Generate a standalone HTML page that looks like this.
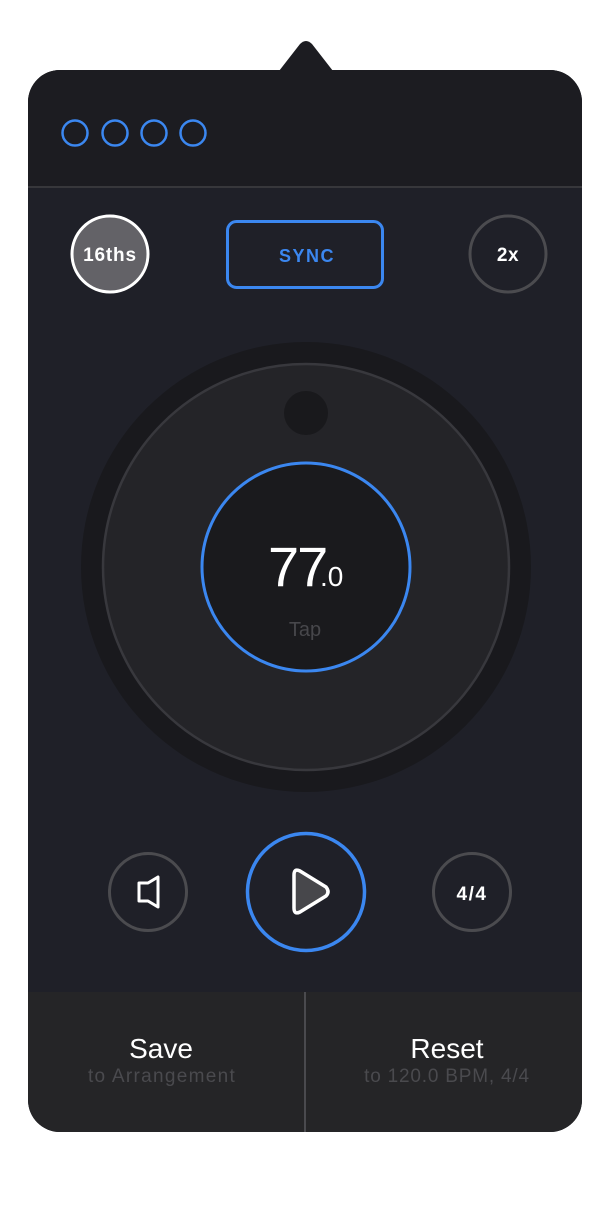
<!DOCTYPE html>
<html><head><meta charset="utf-8"><style>
html,body{margin:0;padding:0;background:#fff;width:610px;height:1216px;overflow:hidden}
svg{display:block}
text{font-family:"Liberation Sans",sans-serif}
</style></head><body>
<svg width="610" height="1216" viewBox="0 0 610 1216">
  <defs><clipPath id="c"><rect x="28" y="70" width="554" height="1062" rx="32"/></clipPath></defs>
  <path d="M279 71 L300 44 Q306 38 312 44 L333 71 Z" fill="#1c1c21"/>
  <g clip-path="url(#c)">
    <rect x="28" y="70" width="554" height="1062" fill="#1f2028"/>
    <rect x="28" y="70" width="554" height="117" fill="#1c1c21"/>
    <rect x="28" y="186" width="554" height="2" fill="#37373b"/>
    <rect x="28" y="992" width="554" height="140" fill="#252527"/>
    <rect x="304" y="992" width="2" height="140" fill="#4a4a4e"/>
  </g>
  <g fill="none" stroke="#3b87f0" stroke-width="2.5">
    <circle cx="75" cy="133" r="12.5"/><circle cx="115" cy="133" r="12.5"/>
    <circle cx="154" cy="133" r="12.5"/><circle cx="193" cy="133" r="12.5"/>
  </g>
  <circle cx="110" cy="254" r="38" fill="#636267" stroke="#fff" stroke-width="3"/>
  <text x="110" y="261" fill="#fff" font-size="19" font-weight="bold" text-anchor="middle" letter-spacing="0.8">16ths</text>
  <rect x="227.5" y="221.5" width="155" height="66" rx="9" fill="none" stroke="#3b87f0" stroke-width="3"/>
  <text x="307" y="262" fill="#3b87f0" font-size="18" font-weight="bold" text-anchor="middle" letter-spacing="1.5">SYNC</text>
  <circle cx="508" cy="254" r="38" fill="none" stroke="#4b4b4f" stroke-width="3"/>
  <text x="508" y="261" fill="#fff" font-size="19" font-weight="bold" text-anchor="middle" letter-spacing="0.5">2x</text>

  <circle cx="306" cy="567" r="225" fill="#19191d"/>
  <circle cx="306" cy="567" r="203" fill="#242428" stroke="#38383d" stroke-width="2.5"/>
  <circle cx="306" cy="413" r="22" fill="#19191c"/>
  <circle cx="306" cy="567" r="104" fill="#1a1a1d" stroke="#3b87f0" stroke-width="3"/>
  <text x="268" y="586" fill="#fff" font-size="56" letter-spacing="-2">77</text>
  <text x="320" y="586" fill="#fff" font-size="28">.0</text>
  <text x="305" y="636" fill="#47474b" font-size="20" text-anchor="middle">Tap</text>

  <circle cx="148" cy="892" r="38.5" fill="none" stroke="#4b4b4f" stroke-width="3"/>
  <path d="M139 883 L148 883 L158 877 L158 907 L148 901 L139 901 Z" fill="none" stroke="#fff" stroke-width="3" stroke-linejoin="round"/>
  <circle cx="306" cy="892" r="58.5" fill="none" stroke="#3b87f0" stroke-width="3.5"/>
  <path d="M294 875 Q294 868 300 871 L326 887 Q330 892 326 896 L300 912 Q294 915 294 908 Z" fill="#47474b" stroke="#fff" stroke-width="3.5" stroke-linejoin="round"/>
  <circle cx="472" cy="892" r="38.5" fill="none" stroke="#4b4b4f" stroke-width="3"/>
  <text x="472" y="900" fill="#fff" font-size="19" font-weight="bold" text-anchor="middle" letter-spacing="1.5">4/4</text>

  <text x="161" y="1058" fill="#fff" font-size="28" text-anchor="middle">Save</text>
  <text x="162" y="1082" fill="#4a4a4e" font-size="19" text-anchor="middle" letter-spacing="1.3">to Arrangement</text>
  <text x="447" y="1058" fill="#fff" font-size="28" text-anchor="middle">Reset</text>
  <text x="447" y="1082" fill="#4a4a4e" font-size="19" text-anchor="middle" letter-spacing="0.8">to 120.0 BPM, 4/4</text>
</svg>
</body></html>
